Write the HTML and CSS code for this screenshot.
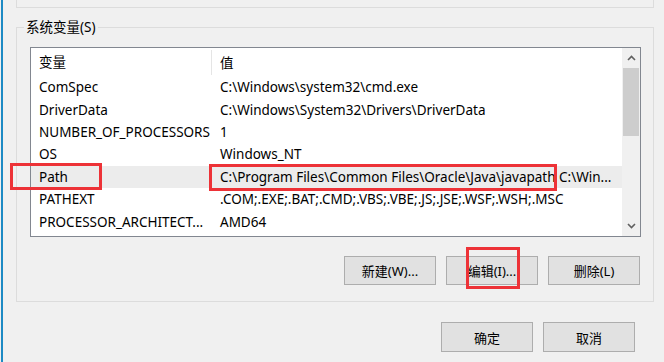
FILE: index.html
```html
<!DOCTYPE html>
<html lang="zh-CN">
<head>
  <meta charset="UTF-8" />
  <title>环境变量</title>
  <link rel="stylesheet" href="styles.css">
</head>
<body>
  <div class="window">
    <div class="prev-group"></div>

    <fieldset class="group">
      <legend>系统变量(S)</legend>
      <div class="list">
        <div class="table">
          <div class="row head"><span class="cell name">变量</span><span class="cell">值</span></div>
          <div class="row"><span class="cell name">ComSpec</span><span class="cell">C:\Windows\system32\cmd.exe</span></div>
          <div class="row"><span class="cell name">DriverData</span><span class="cell">C:\Windows\System32\Drivers\DriverData</span></div>
          <div class="row"><span class="cell name">NUMBER_OF_PROCESSORS</span><span class="cell">1</span></div>
          <div class="row"><span class="cell name">OS</span><span class="cell">Windows_NT</span></div>
          <div class="row selected"><span class="cell name">Path</span><span class="cell">C:\Program Files\Common Files\Oracle\Java\javapath C:\Win...</span></div>
          <div class="row"><span class="cell name">PATHEXT</span><span class="cell">.COM;.EXE;.BAT;.CMD;.VBS;.VBE;.JS;.JSE;.WSF;.WSH;.MSC</span></div>
          <div class="row"><span class="cell name">PROCESSOR_ARCHITECT...</span><span class="cell">AMD64</span></div>
        </div>
        <div class="scrollbar">
          <span class="arrow">
            <svg width="9" height="6" viewBox="0 0 9 6"><path d="M1 5 L4.5 1.5 L8 5" fill="none" stroke="#606060" stroke-width="1.6"/></svg>
          </span>
          <span class="thumb"></span>
          <span class="track"></span>
          <span class="arrow">
            <svg width="9" height="6" viewBox="0 0 9 6"><path d="M1 1 L4.5 4.5 L8 1" fill="none" stroke="#606060" stroke-width="1.6"/></svg>
          </span>
        </div>
      </div>
      <div class="actions">
        <button type="button">新建(W)...</button>
        <button type="button">编辑(I)...</button>
        <button type="button">删除(L)</button>
      </div>
    </fieldset>

    <div class="dialog-actions">
      <button type="button">确定</button>
      <button type="button">取消</button>
    </div>

    <!-- 标注框 -->
    <span class="mark mark-name"></span>
    <span class="mark mark-value"></span>
    <span class="mark mark-edit"></span>
  </div>
</body>
</html>
```

FILE: styles.css
```css
body {
  margin: 0;
  background: #f0f0f0;
  font-family: "Noto Sans", "Noto Sans CJK SC", sans-serif;
  font-size: 13.5px;
  color: #000;
}

.window {
  position: relative;
  height: 362px;
  margin-left: 1px;
  border-left: 2px solid #1d8ac4;
  padding: 0 10px 0 13px;
  box-sizing: border-box;
  overflow: hidden;
}

.prev-group {
  height: 7px;
  border: 1px solid #dcdcdc;
  border-top: none;
}

.group {
  margin: 10px 0 0;
  border: 1px solid #dcdcdc;
  padding: 11px 12px 16px 13px;
}
.group legend {
  padding: 0 2px;
  margin-left: -6px;
  line-height: 18px;
}

.list {
  display: flex;
  height: 190px;
  box-sizing: border-box;
  border: 1px solid #828790;
  background: #fff;
}
.table { flex: 1; overflow: hidden; }
.row {
  display: grid;
  grid-template-columns: 181px 1fr;
  align-items: center;
  height: 22.4px;
  white-space: nowrap;
}
.row.head { height: 28px; }
.cell { padding-left: 8px; overflow: hidden; }
.head .name {
  border-right: 1px solid #e5e5e5;
  line-height: 25px;
}
.row.selected { background: #ececec; }

.scrollbar {
  width: 18px;
  display: flex;
  flex-direction: column;
  background: #f0f0f0;
}
.arrow {
  height: 20px;
  display: flex;
  align-items: center;
  justify-content: center;
}
.thumb {
  height: 68px;
  margin: 0 1px;
  background: #cdcdcd;
}
.track { flex: 1; }

button {
  width: 92px;
  height: 29px;
  padding: 0;
  background: #e1e1e1;
  border: 1px solid #adadad;
  font: inherit;
  font-size: 13px;
  color: #000;
}
.actions {
  display: flex;
  justify-content: flex-end;
  gap: 10px;
  margin-top: 19px;
  padding-right: 1px;
}
.dialog-actions {
  display: flex;
  justify-content: flex-end;
  gap: 10px;
  margin-top: 20px;
  padding-right: 19px;
}
.dialog-actions button { height: 30px; }

.mark {
  position: absolute;
  box-sizing: border-box;
  border: 3px solid #ed3237;
}
.mark-name { left: 7px; top: 163px; width: 92px; height: 27px; }
.mark-value { left: 206px; top: 164px; width: 348px; height: 27px; }
.mark-edit { left: 463px; top: 247px; width: 54px; height: 42px; }
```
